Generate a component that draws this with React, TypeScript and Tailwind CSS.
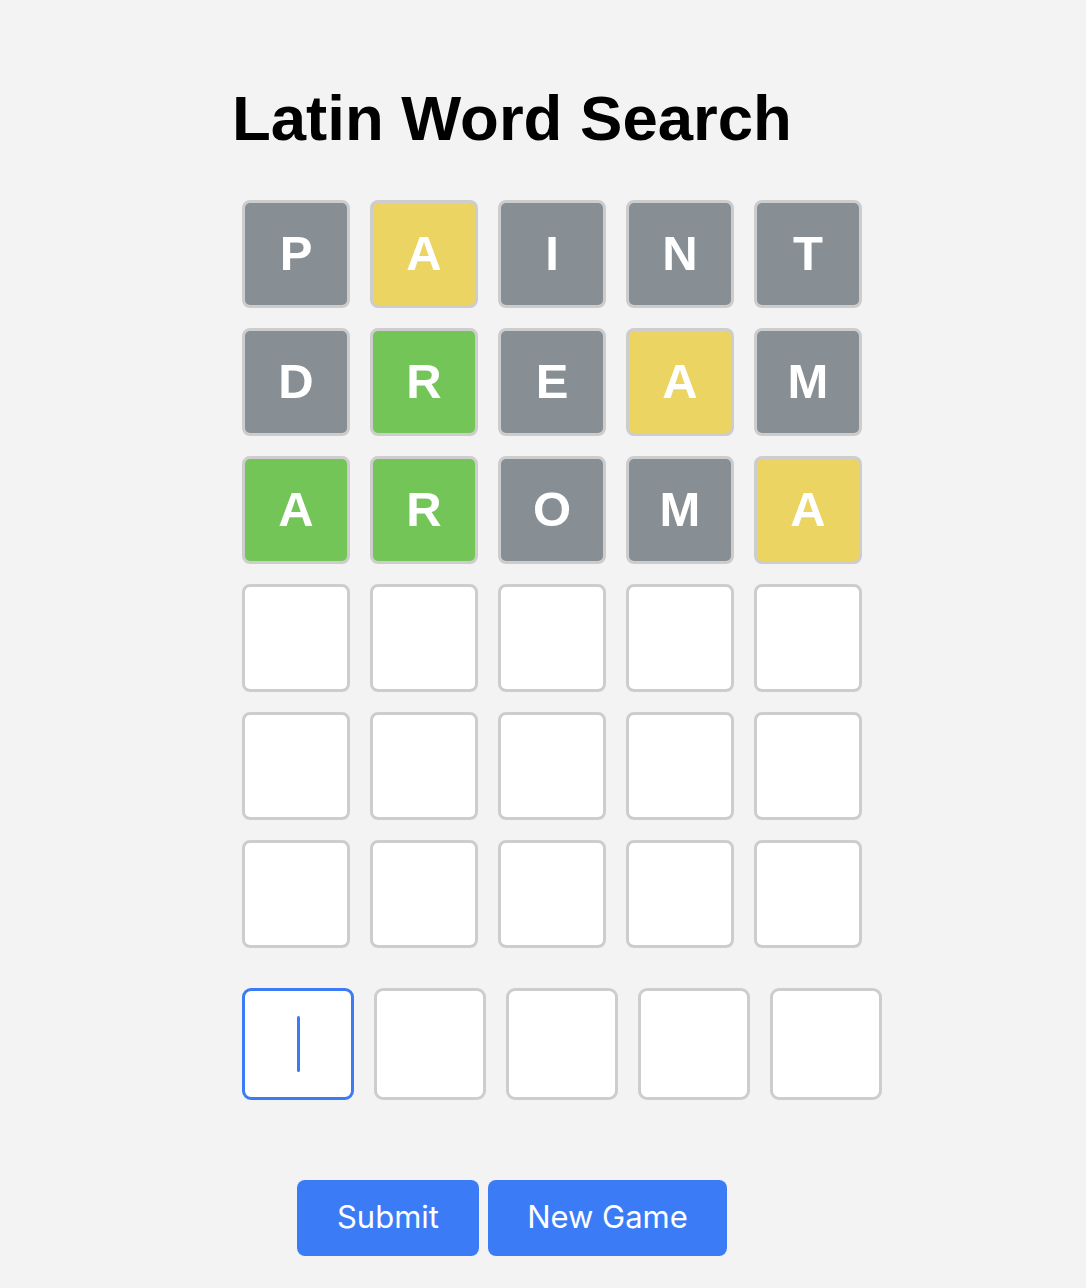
import { useState } from 'react';

// Guesses already played
const GUESSES = [
  [
    { l: 'P', s: 'miss' },
    { l: 'A', s: 'near' },
    { l: 'I', s: 'miss' },
    { l: 'N', s: 'miss' },
    { l: 'T', s: 'miss' },
  ],
  [
    { l: 'D', s: 'miss' },
    { l: 'R', s: 'hit' },
    { l: 'E', s: 'miss' },
    { l: 'A', s: 'near' },
    { l: 'M', s: 'miss' },
  ],
  [
    { l: 'A', s: 'hit' },
    { l: 'R', s: 'hit' },
    { l: 'O', s: 'miss' },
    { l: 'M', s: 'miss' },
    { l: 'A', s: 'near' },
  ],
];

const ROWS = 6;

const tileColor = (s: string) =>
  s === 'hit' ? 'bg-[#72c556]' : s === 'near' ? 'bg-[#ecd462]' : 'bg-[#888f94]';

const App = () => {
  const [input] = useState(['', '', '', '', '']);
  const [active] = useState(0);

  const rows = Array.from({ length: ROWS }, (_, i) => GUESSES[i] || null);

  return (
    <div className="min-h-screen bg-[#f3f3f3] font-['Liberation_Sans',Arial,sans-serif] pt-[87px] pb-8">
      <div className="ml-[232px] w-[560px]">
        <h1 className="text-[63.5px] leading-none font-bold text-black whitespace-nowrap">Latin Word Search</h1>

        {/* Tablero */}
        <div className="ml-[10px] mt-[49px] flex flex-col gap-[20px]">
          {rows.map((row, r) => (
            <div key={r} className="flex gap-[20px]">
              {Array.from({ length: 5 }, (_, c) => {
                const cell = row ? row[c] : null;
                return (
                  <div
                    key={c}
                    className={`w-[108px] h-[108px] shrink-0 rounded-[8px] border-[3.5px] border-[#cdcdcd] flex items-center justify-center ${
                      cell ? tileColor(cell.s) : 'bg-white'
                    }`}
                  >
                    {cell && <span className="text-white font-bold text-[49px] leading-none">{cell.l}</span>}
                  </div>
                );
              })}
            </div>
          ))}
        </div>

        {/* Entrada */}
        <div className="ml-[10px] mt-[40px] flex gap-[20px]">
          {input.map((v, i) => (
            <div
              key={i}
              className={`w-[112px] h-[112px] shrink-0 rounded-[9px] border-[3.5px] bg-white flex items-center justify-center ${
                i === active ? 'border-[#3b7cf6]' : 'border-[#cdcdcd]'
              }`}
            >
              {i === active && !v && <div className="w-[3px] h-[56px] rounded-full bg-[#3b7cf6]"></div>}
              {v}
            </div>
          ))}
        </div>

        {/* Botones */}
        <div className="mt-[80px] flex justify-center gap-[9px] font-['Inter',sans-serif]">
          <button className="h-[76px] w-[182px] rounded-[8px] bg-[#3b7cf6] text-white text-[31px]">Submit</button>
          <button className="h-[76px] w-[239px] rounded-[8px] bg-[#3b7cf6] text-white text-[31px]">New Game</button>
        </div>
      </div>
    </div>
  );
};

export default App;
